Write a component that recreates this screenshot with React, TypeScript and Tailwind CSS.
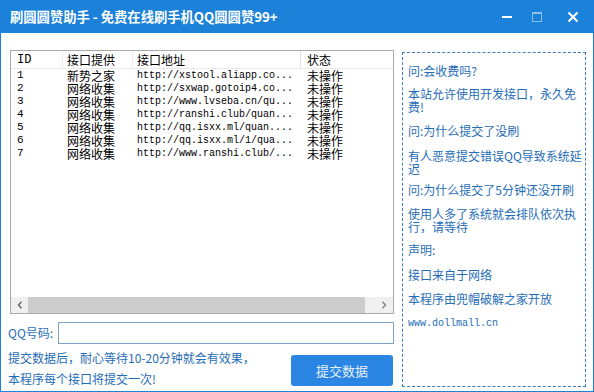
import React from "react";

const cjk = { fontFamily: '"SimSun","Noto Sans CJK SC","Noto Sans",sans-serif' };
const mono = { fontFamily: '"Liberation Mono","DejaVu Sans Mono",monospace' };

const rows = [
  ["1", "新势之家", "http://xstool.aliapp.co..."],
  ["2", "网络收集", "http://sxwap.gotoip4.co..."],
  ["3", "网络收集", "http://www.lvseba.cn/qu..."],
  ["4", "网络收集", "http://ranshi.club/quan..."],
  ["5", "网络收集", "http://qq.isxx.ml/quan...."],
  ["6", "网络收集", "http://qq.isxx.ml/1/qua..."],
  ["7", "网络收集", "http://www.ranshi.club/..."],
];

export default function App() {
  return (
    <div className="w-[594px] h-[392px] bg-white flex flex-col border-x border-b border-[#1c81d9] overflow-hidden" style={cjk}>
      {/* Title bar */}
      <div className="h-[33px] shrink-0 bg-[#1c81d9] flex items-center pl-[9px] pr-[14px]">
        <div className="text-white text-[13.3px] font-bold leading-none" style={{ fontFamily: '"Noto Sans CJK SC","Noto Sans",sans-serif' }}>
          刷圆圆赞助手 - 免费在线刷手机QQ圆圆赞99+
        </div>
        <div className="ml-auto flex items-center">
          <svg width="12" height="12" viewBox="0 0 12 12" className="mr-[18px]">
            <rect x="1" y="5" width="10" height="2" fill="#ffffff" />
          </svg>
          <svg width="12" height="12" viewBox="0 0 12 12" className="mr-[24px]">
            <rect x="1.5" y="1.5" width="9" height="9" fill="none" stroke="#8cc0ee" strokeWidth="1" />
            <rect x="1.5" y="1.5" width="9" height="1.5" fill="#8cc0ee" />
          </svg>
          <svg width="12" height="12" viewBox="0 0 12 12">
            <path d="M1.5 1.5 L10.5 10.5 M10.5 1.5 L1.5 10.5" stroke="#ffffff" strokeWidth="2" />
          </svg>
        </div>
      </div>

      {/* Body */}
      <div className="flex flex-1 pt-[17px] pl-[7px]">
        {/* Left column */}
        <div className="w-[386px] flex flex-col">
          <div className="ml-[2px] w-[384px] h-[264px] border border-[#a9a9a9] flex flex-col">
            <div className="grid grid-cols-[51px_70px_168px_1fr] h-[18px] border-b border-[#e8e8e8] text-[12px] leading-[18px] text-black">
              <div className="pl-[6px]" style={mono}>ID</div>
              <div className="pl-[4px] border-l border-[#ececec]">接口提供</div>
              <div className="pl-[4px] border-l border-[#ececec]">接口地址</div>
              <div className="pl-[6px] border-l border-[#e2e2e2]">状态</div>
            </div>
            <div className="flex flex-col">
              {rows.map((r) => (
                <div key={r[0]} className="grid grid-cols-[51px_70px_168px_1fr] h-[13px] text-[12px] leading-[13px] text-black whitespace-nowrap">
                  <div className="pl-[6px] text-[11px]" style={mono}>{r[0]}</div>
                  <div className="pl-[5px]">{r[1]}</div>
                  <div className="pl-[5px] text-[10px]" style={mono}>{r[2]}</div>
                  <div className="pl-[7px]">未操作</div>
                </div>
              ))}
            </div>
            {/* scrollbar */}
            <div className="mt-auto h-[16px] bg-[#f0f0f0] flex items-stretch">
              <div className="w-[17px] flex items-center justify-center">
                <svg width="6" height="8" viewBox="0 0 6 8">
                  <path d="M4.5 0.8 L1.5 4 L4.5 7.2" stroke="#606060" strokeWidth="1.3" fill="none" />
                </svg>
              </div>
              <div className="w-[337px] bg-[#cdcdcd]" />
              <div className="flex-1 flex items-center justify-end pr-[6px]">
                <svg width="6" height="8" viewBox="0 0 6 8">
                  <path d="M1.5 0.8 L4.5 4 L1.5 7.2" stroke="#808080" strokeWidth="1.3" fill="none" />
                </svg>
              </div>
            </div>
          </div>

          {/* QQ input row */}
          <div className="flex items-center mt-[8px]">
            <div className="w-[50px] text-[12px] text-[#1f6db6] leading-none">QQ号码:</div>
            <div className="w-[336px] h-[22px] border border-[#7fa3c4] bg-white" />
          </div>

          {/* bottom row */}
          <div className="flex justify-between mt-[6px]">
            <div className="flex flex-col text-[12px] text-[#1f6db6] leading-[16px]">
              <div>提交数据后，耐心等待10-20分钟就会有效果，</div>
              <div className="mt-[5px]">本程序每个接口将提交一次!</div>
            </div>
            <div className="mt-[5px] mr-[1px] w-[102px] h-[31px] rounded-[3px] bg-[#2a86e2] flex items-center justify-center text-[13px] text-[#e8f1fb]">
              提交数据
            </div>
          </div>
        </div>

        {/* Right panel */}
        <div className="ml-[8px] mt-[2px] w-[184px] h-[335px] border border-dashed border-[#3a7cbc] pl-[5px] pt-[11px] flex flex-col text-[12px] leading-[13px] text-[#1f6db6] whitespace-nowrap">
          <div>问:会收费吗?</div>
          <div className="mt-[10px]">本站允许使用开发接口，永久免<br />费!</div>
          <div className="mt-[11px]">问:为什么提交了没刷</div>
          <div className="mt-[12px]">有人恶意提交错误QQ导致系统延<br />迟</div>
          <div className="mt-[8px]">问:为什么提交了5分钟还没开刷</div>
          <div className="mt-[11px]">使用人多了系统就会排队依次执<br />行，请等待</div>
          <div className="mt-[10px]">声明:</div>
          <div className="mt-[12px]">接口来自于网络</div>
          <div className="mt-[11px]">本程序由兜帽破解之家开放</div>
          <div className="mt-[12px] text-[10px]" style={mono}>www.dollmall.cn</div>
        </div>
      </div>
    </div>
  );
}
